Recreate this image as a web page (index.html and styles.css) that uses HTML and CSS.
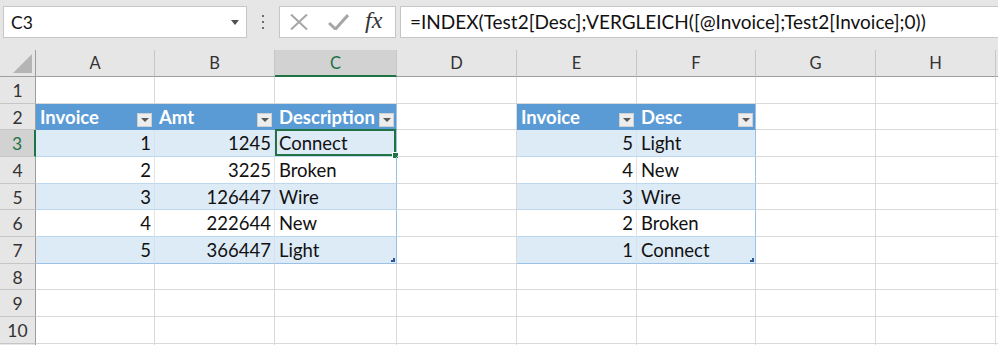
FILE: index.html
```html
<!DOCTYPE html>
<html lang="en">
  <head>
    <meta charset="UTF-8" />
    <meta name="viewport" content="width=device-width, initial-scale=1.0" />
    <title>Sheet</title>

    <link rel="stylesheet" href="styles.css">
  </head>
  <body>
    <div class="formula-bar">
      <div class="name-box">
        <span>C3</span>
        <svg class="name-arrow" width="8" height="5" viewBox="0 0 8 5"><path d="M0 0H8L4 5Z" fill="#505050"/></svg>
      </div>
      <div class="grip">
        <i></i><i></i><i></i>
      </div>
      <div class="fx-buttons">
        <svg width="18" height="16" viewBox="0 0 18 16"><path d="M1 0.5L17 15.5M17 0.5L1 15.5" stroke="#a6a6a6" stroke-width="2"/></svg>
        <svg width="21" height="16" viewBox="0 0 21 16"><path d="M1 9L7.5 15L20 1" fill="none" stroke="#a6a6a6" stroke-width="3"/></svg>
        <span class="fx">fx</span>
      </div>
      <div class="formula-input">=INDEX(Test2[Desc];VERGLEICH([@Invoice];Test2[Invoice];0))</div>
    </div>

    <div class="sheet">
      <!-- column headers -->
      <div class="corner">
        <svg width="19" height="19" viewBox="0 0 19 19"><path d="M19 0V19H0Z" fill="#b5b5b5"/></svg>
      </div>
      <div class="col-head">A</div>
      <div class="col-head">B</div>
      <div class="col-head selected">C</div>
      <div class="col-head">D</div>
      <div class="col-head">E</div>
      <div class="col-head">F</div>
      <div class="col-head">G</div>
      <div class="col-head">H</div>
      <div class="col-head"></div>

      <!-- row 1 -->
      <div class="row-head">1</div>
      <div class="cell"></div><div class="cell"></div><div class="cell"></div><div class="cell"></div>
      <div class="cell"></div><div class="cell"></div><div class="cell"></div><div class="cell"></div><div class="cell"></div>

      <!-- row 2 -->
      <div class="row-head">2</div>
      <div class="cell th">Invoice<span class="filter"></span></div>
      <div class="cell th">Amt<span class="filter"></span></div>
      <div class="cell th last">Description<span class="filter"></span></div>
      <div class="cell"></div>
      <div class="cell th">Invoice<span class="filter"></span></div>
      <div class="cell th last">Desc<span class="filter"></span></div>
      <div class="cell"></div><div class="cell"></div><div class="cell"></div>

      <!-- row 3 -->
      <div class="row-head selected">3</div>
      <div class="cell band num">1</div>
      <div class="cell band num">1245</div>
      <div class="cell band last active">Connect<span class="frame"><span class="handle"></span></span></div>
      <div class="cell"></div>
      <div class="cell band num">5</div>
      <div class="cell band last">Light</div>
      <div class="cell"></div><div class="cell"></div><div class="cell"></div>

      <!-- row 4 -->
      <div class="row-head">4</div>
      <div class="cell td num">2</div>
      <div class="cell td num">3225</div>
      <div class="cell td last">Broken</div>
      <div class="cell"></div>
      <div class="cell td num">4</div>
      <div class="cell td last">New</div>
      <div class="cell"></div><div class="cell"></div><div class="cell"></div>

      <!-- row 5 -->
      <div class="row-head">5</div>
      <div class="cell band num">3</div>
      <div class="cell band num">126447</div>
      <div class="cell band last">Wire</div>
      <div class="cell"></div>
      <div class="cell band num">3</div>
      <div class="cell band last">Wire</div>
      <div class="cell"></div><div class="cell"></div><div class="cell"></div>

      <!-- row 6 -->
      <div class="row-head">6</div>
      <div class="cell td num">4</div>
      <div class="cell td num">222644</div>
      <div class="cell td last">New</div>
      <div class="cell"></div>
      <div class="cell td num">2</div>
      <div class="cell td last">Broken</div>
      <div class="cell"></div><div class="cell"></div><div class="cell"></div>

      <!-- row 7 -->
      <div class="row-head">7</div>
      <div class="cell band num end">5</div>
      <div class="cell band num end">366447</div>
      <div class="cell band last end">Light<span class="resize"></span></div>
      <div class="cell"></div>
      <div class="cell band num end">1</div>
      <div class="cell band last end">Connect<span class="resize"></span></div>
      <div class="cell"></div><div class="cell"></div><div class="cell"></div>

      <!-- rows 8-10, plus the edge of the next one -->
      <div class="row-head">8</div>
      <div class="cell"></div><div class="cell"></div><div class="cell"></div><div class="cell"></div>
      <div class="cell"></div><div class="cell"></div><div class="cell"></div><div class="cell"></div><div class="cell"></div>
      <div class="row-head">9</div>
      <div class="cell"></div><div class="cell"></div><div class="cell"></div><div class="cell"></div>
      <div class="cell"></div><div class="cell"></div><div class="cell"></div><div class="cell"></div><div class="cell"></div>
      <div class="row-head">10</div>
      <div class="cell"></div><div class="cell"></div><div class="cell"></div><div class="cell"></div>
      <div class="cell"></div><div class="cell"></div><div class="cell"></div><div class="cell"></div><div class="cell"></div>
      <div class="row-head"></div>
      <div class="cell"></div><div class="cell"></div><div class="cell"></div><div class="cell"></div>
      <div class="cell"></div><div class="cell"></div><div class="cell"></div><div class="cell"></div><div class="cell"></div>
    </div>
  </body>
</html>
```

FILE: styles.css
```css
* {
  box-sizing: border-box;
}

body {
  margin: 0;
  background-color: #e6e6e6;
  font-family: Lato, "Liberation Sans", sans-serif;
  color: #111;
  overflow: hidden;
}

.formula-bar {
  display: flex;
  align-items: flex-start;
  height: 50px;
  padding: 6px 0 0 3px;
}

.name-box {
  display: flex;
  align-items: center;
  justify-content: space-between;
  width: 244px;
  height: 32px;
  padding: 0 7px 0 7px;
  background-color: #fff;
  border: 1px solid #c6c6c6;
  font-size: 17.5px;
}

.grip {
  display: flex;
  flex-direction: column;
  gap: 4px;
  width: 32px;
  padding: 9px 0 0 15px;
}

.grip i {
  display: block;
  width: 2px;
  height: 2px;
  background-color: #6e6e6e;
}

.fx-buttons {
  display: flex;
  align-items: center;
  width: 117px;
  height: 32px;
  padding-left: 10px;
  background-color: #fff;
  border: 1px solid #c6c6c6;
}

.fx-buttons svg:nth-child(2) {
  margin-left: 20px;
}

.fx {
  margin-left: 16px;
  font-family: "Liberation Serif", serif;
  font-style: italic;
  font-size: 24px;
  color: #333;
  position: relative;
  top: -2px;
}

.formula-input {
  flex: 1;
  height: 32px;
  margin-left: 4px;
  padding-left: 9px;
  background-color: #fff;
  border: 1px solid #c6c6c6;
  border-right: none;
  font-size: 19px;
  line-height: 30px;
  white-space: nowrap;
}

.sheet {
  display: grid;
  grid-template-columns: 36px 119px 120px 122px 120px 120px 119px 120px 120px 1fr;
  grid-template-rows: 27px repeat(11, 26.67px);
  background-color: #fff;
}

.corner {
  display: flex;
  align-items: flex-end;
  justify-content: flex-end;
  padding: 0 3px 3px 0;
  background-color: #e6e6e6;
  border-right: 1px solid #9e9e9e;
  border-bottom: 1px solid #9e9e9e;
}

.col-head {
  background-color: #e6e6e6;
  border-right: 1px solid #c6c6c6;
  border-bottom: 1px solid #9e9e9e;
  font-size: 16.5px;
  color: #333;
  text-align: center;
  line-height: 27px;
}

.col-head.selected {
  background-color: #d2d2d2;
  color: #217346;
  border-bottom: 2px solid #217346;
}

.row-head {
  background-color: #e6e6e6;
  border-right: 1px solid #9e9e9e;
  border-bottom: 1px solid #c6c6c6;
  font-size: 17.5px;
  color: #333;
  text-align: center;
  line-height: 27px;
}

.row-head.selected {
  background-color: #d2d2d2;
  color: #217346;
  border-right: 2px solid #217346;
}

.cell {
  position: relative;
  border-right: 1px solid #d9d9d9;
  border-bottom: 1px solid #d9d9d9;
  padding: 0 3px 0 4px;
  font-size: 18.5px;
  line-height: 27px;
  white-space: nowrap;
}

.cell.num {
  text-align: right;
}

.cell.th {
  background-color: #5b9bd5;
  border-right-color: #5b9bd5;
  border-bottom-color: #5b9bd5;
  color: #fff;
  font-weight: bold;
}

.cell.band {
  background-color: #ddebf7;
  border-bottom-color: #bdd7ee;
  border-right-color: #d4e1ee;
}

.cell.td {
  border-bottom-color: #bdd7ee;
  border-right-color: #e4e4e4;
}

.cell.last {
  border-right-color: #9bc2e6;
}

.cell.end {
  border-bottom-color: #9bc2e6;
}

.filter {
  position: absolute;
  right: 2px;
  bottom: 2px;
  width: 15px;
  height: 14px;
  background-color: #ededed;
  border: 1px solid #d0d0d0;
}

.filter::after {
  content: "";
  position: absolute;
  left: 3px;
  top: 4px;
  border-left: 4px solid transparent;
  border-right: 4px solid transparent;
  border-top: 4px solid #595959;
}

.frame {
  position: absolute;
  top: -1px;
  left: 0;
  right: 0;
  bottom: 0;
  border: 2px solid #217346;
}

.handle {
  position: absolute;
  right: -5px;
  bottom: -5px;
  width: 7px;
  height: 7px;
  background-color: #217346;
  border: 1px solid #fff;
}

.resize {
  position: absolute;
  right: 1px;
  bottom: 1px;
  width: 4px;
  height: 4px;
  border-right: 2px solid #2f5597;
  border-bottom: 2px solid #2f5597;
}
```
